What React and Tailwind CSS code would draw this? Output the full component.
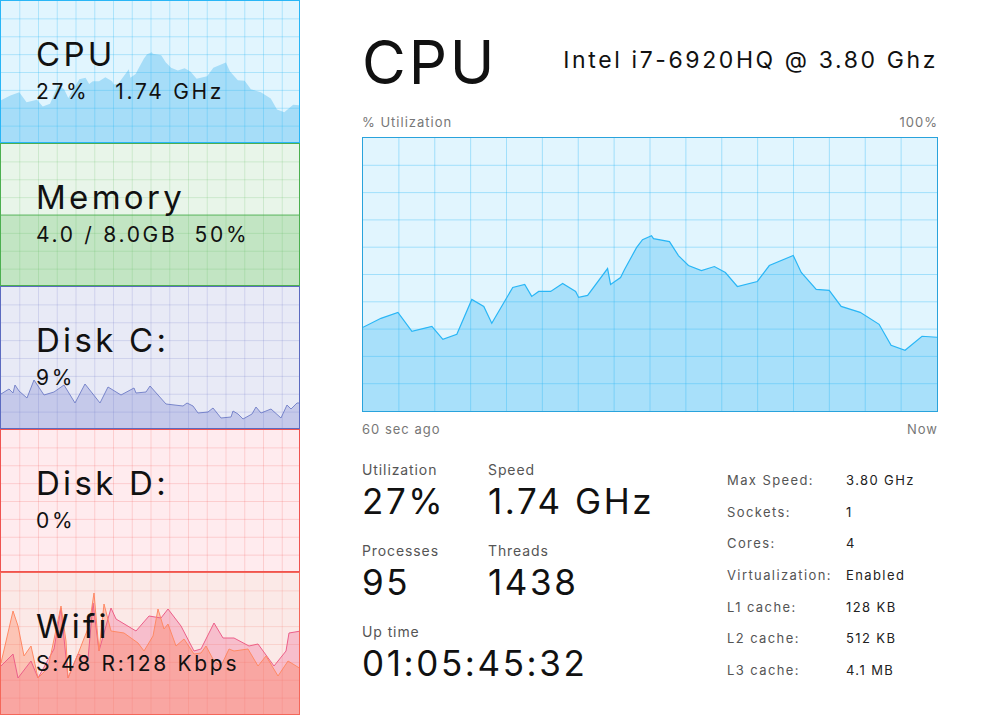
const cpuPts = [
  [0, 190], [18, 181], [35, 175], [49, 194], [69, 189], [80, 202], [94, 197], [109, 162], [121, 169],
  [129, 186], [150, 150], [162, 147], [169, 159], [176, 154], [188, 154], [200, 146], [213, 154],
  [216, 160], [225, 158], [245, 131], [248, 147], [258, 140], [262, 132], [274, 110], [280, 102],
  [289, 98], [291, 101], [307, 104], [316, 118], [326, 128], [339, 133], [352, 129], [363, 135],
  [375, 149], [395, 144], [407, 128], [431, 118], [439, 135], [454, 152], [467, 153], [479, 169],
  [498, 175], [517, 187], [529, 208], [543, 213], [560, 199], [575, 200],
];

const diskPts = [
  [0, 107], [8, 102], [12, 106], [14, 98], [18, 104], [26, 111], [33, 93], [43, 108], [53, 105],
  [63, 98], [74, 116], [84, 97], [99, 116], [107, 100], [120, 108], [133, 101], [135, 106], [145, 105],
  [149, 99], [165, 117], [182, 119], [186, 116], [192, 119], [197, 126], [207, 125], [212, 121],
  [220, 131], [230, 130], [232, 124], [237, 127], [242, 132], [251, 127], [255, 120], [260, 126],
  [270, 122], [280, 131], [286, 118], [290, 122], [296, 116], [300, 116],
];

const wifiSend = [
  [0, 90], [12, 38], [17, 53], [23, 83], [30, 73], [37, 105], [47, 95], [60, 33], [65, 68], [67, 105],
  [77, 81], [82, 68], [88, 53], [93, 20], [98, 78], [103, 31], [110, 58], [123, 60], [137, 70],
  [143, 78], [152, 63], [157, 36], [163, 56], [167, 51], [175, 73], [183, 66], [193, 81], [200, 80],
  [205, 73], [213, 88], [220, 93], [228, 76], [233, 78], [247, 76], [257, 93], [265, 83], [277, 103],
  [287, 88], [300, 96],
];

const wifiRecv = [
  [0, 93], [12, 81], [17, 105], [30, 88], [37, 105], [53, 76], [60, 35], [67, 105], [77, 81], [87, 86],
  [92, 30], [98, 78], [110, 35], [115, 46], [135, 58], [148, 43], [160, 45], [167, 36], [180, 53],
  [193, 78], [200, 76], [213, 50], [222, 65], [233, 65], [248, 73], [257, 71], [273, 93], [285, 78],
  [288, 60], [300, 58],
];

const line = (pts) => pts.map((p) => p.join(",")).join(" ");
const area = (pts, w, h) => `0,${h} ${line(pts)} ${w},${h}`;

function Grid({ w, h, cols, rows, color }) {
  const out = [];
  for (let i = 1; i < cols; i++) {
    const x = (w / cols) * i;
    out.push(<line key={"v" + i} x1={x} y1={0} x2={x} y2={h} stroke={color} strokeWidth="1" />);
  }
  for (let i = 1; i < rows; i++) {
    const y = (h / rows) * i;
    out.push(<line key={"h" + i} x1={0} y1={y} x2={w} y2={y} stroke={color} strokeWidth="1" />);
  }
  return <g>{out}</g>;
}

function SidePanel({ title, sub, border, bg, children }) {
  return (
    <div className={`relative h-[143px] border ${border} ${bg} overflow-hidden`}>
      <svg className="absolute inset-0" width="300" height="143" viewBox="0 0 300 143">
        {children}
      </svg>
      <div className="relative pl-[35px] pt-[30px]">
        <div className="text-[33px] leading-[46px] tracking-[3.3px] text-[#111]">{title}</div>
        <div className="text-[21px] leading-[30px] tracking-[2.7px] text-[#111] whitespace-pre">{sub}</div>
      </div>
    </div>
  );
}

function Stat({ label, value, className = "" }) {
  return (
    <div className={className}>
      <div className="text-[14px] leading-[18px] tracking-[0.9px] text-[#555]">{label}</div>
      <div className="text-[35px] leading-[44px] tracking-[2.6px] text-[#111]">{value}</div>
    </div>
  );
}

const specs = [
  ["Max Speed:", "3.80 GHz"],
  ["Sockets:", "1"],
  ["Cores:", "4"],
  ["Virtualization:", "Enabled"],
  ["L1 cache:", "128 KB"],
  ["L2 cache:", "512 KB"],
  ["L3 cache:", "4.1 MB"],
];

export default function App() {
  return (
    <div
      className="w-[1000px] h-[715px] bg-white flex overflow-hidden"
      style={{ fontFamily: "Inter, 'Noto Sans', sans-serif" }}
    >
      {/* SIDEBAR */}
      <div className="w-[300px] flex flex-col shrink-0">
        <SidePanel title="CPU" sub="27%   1.74 GHz" border="border-[#29b6f6]" bg="bg-[#e1f5fe]">
          <svg viewBox="0 0 575 274" width="300" height="143" preserveAspectRatio="none">
            <polygon points={area(cpuPts, 575, 274)} fill="#a6ddf8" />
          </svg>
          <Grid w={300} h={143} cols={16} rows={8} color="rgba(41,182,246,0.28)" />
        </SidePanel>

        <SidePanel title="Memory" sub="4.0 / 8.0GB  50%" border="border-[#4caf50]" bg="bg-[#e8f5e9]">
          <rect x="0" y="71" width="300" height="72" fill="#c2e5c3" />
          <line x1="0" y1="71" x2="300" y2="71" stroke="#66bb6a" strokeWidth="1" />
          <Grid w={300} h={143} cols={16} rows={8} color="rgba(76,175,80,0.18)" />
        </SidePanel>

        <SidePanel title="Disk C:" sub="9%" border="border-[#5c6bc0]" bg="bg-[#e8eaf6]">
          <polygon points={area(diskPts, 300, 143)} fill="#c5c9ea" />
          <polyline points={line(diskPts)} fill="none" stroke="#7986cb" strokeWidth="1" />
          <Grid w={300} h={143} cols={16} rows={8} color="rgba(92,107,192,0.18)" />
        </SidePanel>

        <SidePanel title="Disk D:" sub="0%" border="border-[#ef5350]" bg="bg-[#ffebee]">
          <Grid w={300} h={143} cols={16} rows={8} color="rgba(239,83,80,0.2)" />
        </SidePanel>

        <SidePanel title="Wifi" sub="S:48 R:128 Kbps" border="border-[#f4675a]" bg="bg-[#fbe9e7]">
          <polygon points={area(wifiRecv, 300, 143)} fill="rgba(236,64,122,0.25)" />
          <polygon points={area(wifiSend, 300, 143)} fill="rgba(255,112,67,0.3)" />
          <polyline points={line(wifiRecv)} fill="none" stroke="#ec5f8a" strokeWidth="1" />
          <polyline points={line(wifiSend)} fill="none" stroke="#ff8a65" strokeWidth="1" />
          <Grid w={300} h={143} cols={16} rows={8} color="rgba(244,103,90,0.18)" />
        </SidePanel>
      </div>

      {/* MAIN */}
      <div className="flex-1 pl-[62px] pr-[62px] pt-[27px]">
        <div className="flex items-end justify-between">
          <div className="text-[60px] leading-[70px] tracking-[2.8px] text-[#111]">CPU</div>
          <div className="text-[23px] leading-[30px] tracking-[2.6px] text-[#111] mb-[22px]">
            Intel i7-6920HQ @ 3.80 Ghz
          </div>
        </div>

        <div className="flex justify-between mt-[17px] text-[13px] leading-[16px] tracking-[1px] text-[#777]">
          <span>% Utilization</span>
          <span>100%</span>
        </div>

        <div className="mt-[7px] h-[275px] border border-[#29a3dc] bg-[#e1f5fe]">
          <svg width="100%" height="100%" viewBox="0 0 575 274" preserveAspectRatio="none">
            <polygon points={area(cpuPts, 575, 274)} fill="#a8e0fa" />
            <Grid w={575} h={274} cols={16} rows={10} color="rgba(41,182,246,0.35)" />
            <polyline points={line(cpuPts)} fill="none" stroke="#29b6f6" strokeWidth="1.2" />
          </svg>
        </div>

        <div className="flex justify-between mt-[9px] text-[13px] leading-[16px] tracking-[1px] text-[#777]">
          <span>60 sec ago</span>
          <span>Now</span>
        </div>

        <div className="flex mt-[24px]">
          <div className="w-[365px] grid grid-cols-[126px_auto] content-start gap-y-[19px]">
            <Stat label="Utilization" value="27%" />
            <Stat label="Speed" value="1.74 GHz" />
            <Stat label="Processes" value="95" />
            <Stat label="Threads" value="1438" />
            <Stat label="Up time" value="01:05:45:32" className="col-span-2" />
          </div>

          <div className="grid grid-cols-[119px_auto] auto-rows-[31.7px] content-start pt-[4px] text-[13px] tracking-[1.4px]">
            {specs.map(([k, v]) => (
              <div key={k} className="contents">
                <div className="text-[#555] leading-[31.7px]">{k}</div>
                <div className="text-[#222] leading-[31.7px]">{v}</div>
              </div>
            ))}
          </div>
        </div>
      </div>
    </div>
  );
}
